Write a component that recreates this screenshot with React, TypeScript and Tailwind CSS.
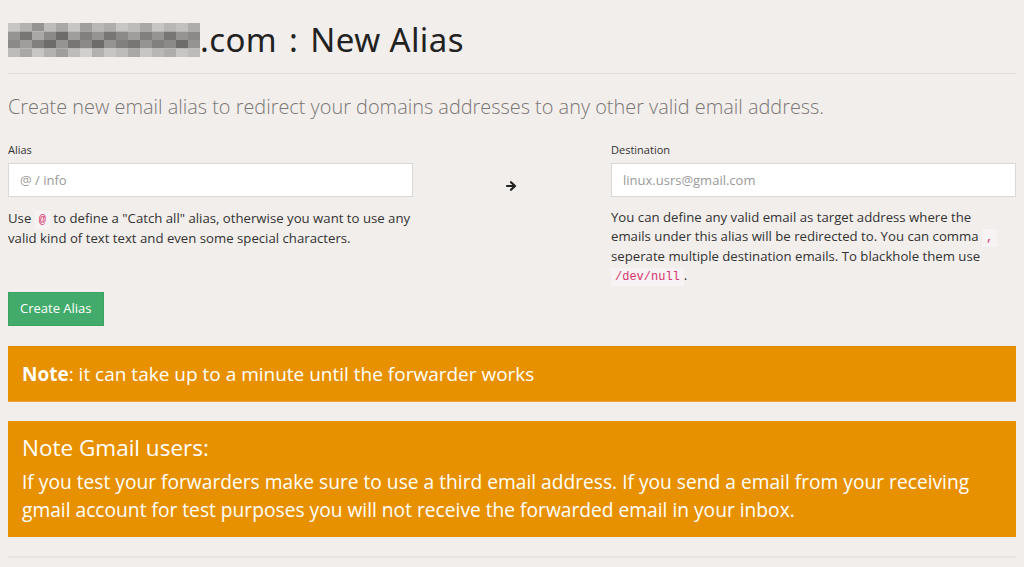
import React from "react";

const shades = [
  [200, 180, 150, 190, 170, 200, 160, 185, 175, 200, 190, 170, 200, 185, 195, 175],
  [150, 120, 170, 140, 110, 160, 130, 150, 120, 140, 160, 130, 150, 120, 150, 140],
  [140, 160, 130, 110, 150, 120, 140, 110, 150, 130, 120, 150, 130, 140, 110, 150],
  [190, 170, 200, 180, 160, 190, 210, 180, 200, 190, 170, 200, 185, 175, 200, 190],
];

function Pixelated() {
  const cw = 12;
  const ch = 8.5;
  return (
    <svg width={192} height={34} viewBox="0 0 192 34" className="block">
      {shades.map((row, r) =>
        row.map((v, c) => (
          <rect
            key={`${r}-${c}`}
            x={c * cw}
            y={r * ch}
            width={cw}
            height={ch}
            fill={`rgb(${v},${v - 2},${v - 4})`}
          />
        ))
      )}
    </svg>
  );
}

const codeCls =
  "bg-[#f7f2f3] text-[#d6336c] font-['Liberation_Mono',monospace] text-[12px] leading-none py-[2px] px-[4px]";

export default function App() {
  return (
    <div className="min-h-[567px] w-full bg-[#f2eeeb] px-[8px] font-['Open_Sans','Noto_Sans',sans-serif] text-[#333]">
      <div className="flex items-end pt-[21px] pb-[14px] border-b border-[#e0dcd9]">
        <div className="mb-[2px]">
          <Pixelated />
        </div>
        <h1 className="font-['Noto_Sans','Open_Sans',sans-serif] text-[33px] leading-[38px] text-[#222] tracking-[0.4px]">
          .com <span className="px-[3px]">:</span> New Alias
        </h1>
      </div>

      <p className="mt-[19px] text-[19.9px] leading-[28px] text-[#7a7776] font-light">
        Create new email alias to redirect your domains addresses to any other valid email address.
      </p>

      <div className="mt-[22px] grid grid-cols-[405px_1fr_405px]">
        <div>
          <label className="block text-[11px] leading-[14px] text-[#333]">Alias</label>
          <input
            className="mt-[6px] block w-full h-[34px] bg-white border border-[#d9d9d9] px-[11px] text-[13px] text-[#333] placeholder:text-[#999] outline-none"
            placeholder="@ / info"
          />
          <p className="mt-[11px] text-[13.2px] leading-[20px] text-[#333]">
            Use <code className={codeCls}>@</code> to define a "Catch all" alias, otherwise you want to use any valid kind of text text and even some special characters.
          </p>
        </div>
        <div className="flex justify-center pt-[37px]">
          <svg width="12" height="12" viewBox="0 0 12 12">
            <path d="M1 6h7M5 2.2L9 6l-4 3.8" stroke="#222" strokeWidth="2.2" fill="none" strokeLinecap="round" strokeLinejoin="round" />
          </svg>
        </div>
        <div>
          <label className="block text-[11px] leading-[14px] text-[#333]">Destination</label>
          <input
            className="mt-[6px] block w-full h-[34px] bg-white border border-[#d9d9d9] px-[11px] text-[13px] text-[#333] placeholder:text-[#999] outline-none"
            placeholder="linux.usrs@gmail.com"
          />
          <p className="mt-[11px] pr-[10px] text-[13.2px] leading-[19.3px] text-[#333]">
            You can define any valid email as target address where the emails under this alias will be redirected to. You can comma{" "}
            <code className={codeCls}>,</code> seperate multiple destination emails. To blackhole them use{" "}
            <code className={codeCls}>/dev/null</code>.
          </p>
        </div>
      </div>

      <button className="mt-[7px] block h-[34px] px-[11px] bg-[#42ab6b] border border-[#3ba262] text-white text-[13px]">
        Create Alias
      </button>

      <div className="mt-[20px] h-[56px] flex items-center bg-[#e89100] border-t border-[#de8a00] border-b border-b-[#f0a440] px-[14px] text-white text-[19px]">
        <span>
          <b className="font-bold">Note</b>: it can take up to a minute until the forwarder works
        </span>
      </div>

      <div className="mt-[19px] bg-[#e89100] px-[14px] pt-[11px] pb-[13px] text-white">
        <div className="text-[22.5px] leading-[31px]">Note Gmail users:</div>
        <p className="mt-[5px] text-[19.2px] leading-[28px]">
          If you test your forwarders make sure to use a third email address. If you send a email from your receiving gmail account for test purposes you will not receive the forwarded email in your inbox.
        </p>
      </div>

      <div className="mt-[19px] border-t-2 border-[#e8e4e1]" />
    </div>
  );
}
